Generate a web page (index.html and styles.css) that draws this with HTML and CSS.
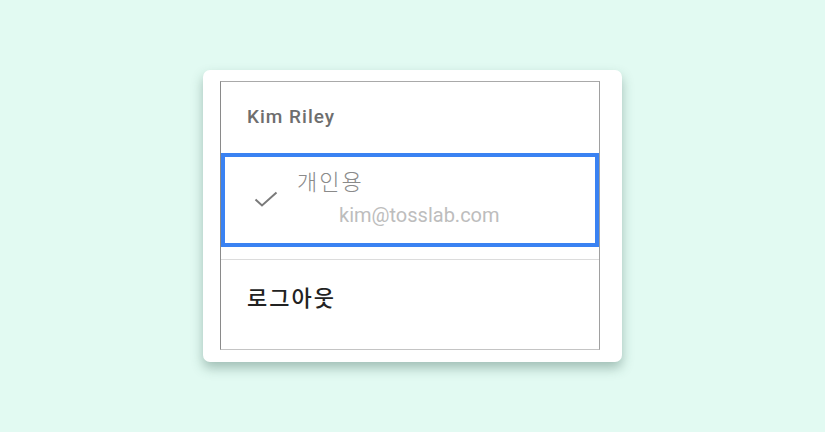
FILE: index.html
```html
<!DOCTYPE html>
<html lang="ko">
<head>
<meta charset="utf-8">
<link rel="stylesheet" href="styles.css">
</head>
<body>
<div class="stage">
  <div class="card">
    <div class="menu">
      <div class="menu-head">Kim Riley</div>
      <div class="account selected">
        <svg class="check" width="24" height="16" viewBox="0 0 24 16"><path d="M1.5 8.5 L8 14.5 L22.5 1.5" fill="none" stroke="#7a7a7a" stroke-width="2"/></svg>
        <div class="account-text">
          <div class="account-name">개인용</div>
          <div class="account-mail">kim@tosslab.com</div>
        </div>
      </div>
      <div class="spacer"></div>
      <div class="logout">로그아웃</div>
    </div>
  </div>
</div>
</body>
</html>
```

FILE: styles.css
```css
html, body {
  margin: 0;
  padding: 0;
}
body {
  background: #e2faf2;
  font-family: Roboto, "Noto Sans CJK KR", sans-serif;
}
.stage {
  width: 825px;
  height: 432px;
  display: flex;
  align-items: center;
  justify-content: center;
}
.card {
  width: 419px;
  height: 292px;
  box-sizing: border-box;
  background: #fff;
  border-radius: 7px;
  padding: 11px 22px 12px 17px;
  box-shadow: 0 6px 12px rgba(40, 80, 70, 0.35);
}
.menu {
  height: 100%;
  box-sizing: border-box;
  border-top: 1px solid #a9a9a9;
  border-left: 1px solid #8a8a8a;
  border-right: 1px solid #a0a0a0;
  border-bottom: 1px solid #c4c4c4;
  display: flex;
  flex-direction: column;
}
.menu-head {
  height: 71px;
  box-sizing: border-box;
  padding: 23px 0 0 26px;
  font-size: 19px;
  letter-spacing: 1px;
  font-weight: 500;
  color: #6e6e6e;
}
.account {
  height: 94px;
  box-sizing: border-box;
  border: 4px solid #3a82f2;
  display: flex;
  align-items: flex-start;
  padding: 10px 0 0 29px;
}
.check {
  margin-top: 24px;
  flex: none;
}
.account-text {
  margin-left: 19px;
}
.account-name {
  font-size: 22px;
  letter-spacing: 2px;
  color: #8a8a8a;
  line-height: 26px;
  font-family: "Noto Sans CJK KR", sans-serif;
  font-weight: 300;
}
.account-mail {
  margin: 11px 0 0 42px;
  font-size: 20px;
  color: #bdbdbd;
  line-height: 22px;
}
.spacer {
  height: 12px;
  border-bottom: 1px solid #dcdcdc;
}
.logout {
  padding: 20px 0 0 26px;
  font-size: 22px;
  letter-spacing: 2px;
  color: #222;
  font-weight: 500;
  font-family: "Noto Sans CJK KR", sans-serif;
}
```
